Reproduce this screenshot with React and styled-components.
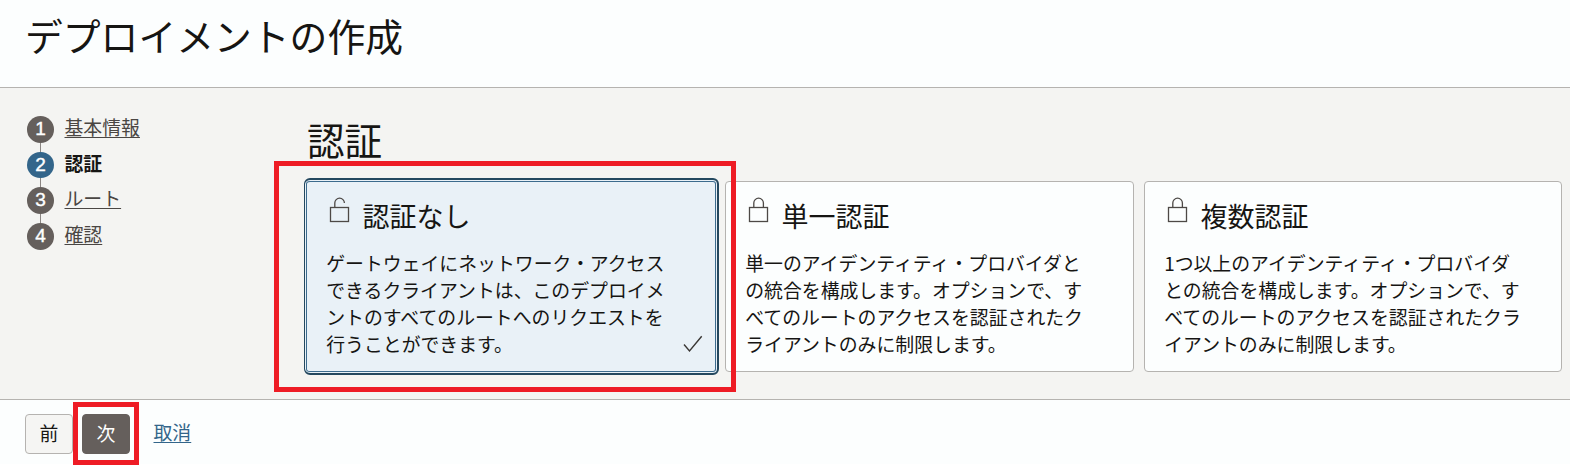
import React from "react";
import styled, { createGlobalStyle, css } from "styled-components";

const Global = createGlobalStyle`
  *, *::before, *::after { box-sizing: border-box; }
  body {
    margin: 0;
    background: #fff;
    color: #161513;
    font-family: "Noto Sans CJK JP", "Noto Sans", sans-serif;
    font-size: 18.88px;
    line-height: 27px;
    overflow: hidden;
  }
`;

const Page = styled.div`
  position: relative;
  width: 1570px;
  height: 472px;
`;

const Header = styled.header`
  height: 88px;
  padding: 8px 25px 0;
  background: #fcfefe;
  border-bottom: 1px solid #b5b3b0;
`;

const PageTitle = styled.h1`
  margin: 0;
  font-size: 37.8px;
  font-weight: 400;
  line-height: 54px;
`;

const Body = styled.main`
  display: flex;
  height: 312px;
  background: #f4f4f2;
  border-bottom: 1px solid #b5b3b0;
`;

const Steps = styled.ol`
  flex: none;
  width: 304px;
  margin: 0;
  padding: 28px 0 0 27px;
  list-style: none;
`;

const Step = styled.li`
  display: flex;
  align-items: flex-start;
  height: 35.67px;
`;

const Marker = styled.div`
  display: flex;
  flex-direction: column;
  align-items: center;
  width: 27px;
  height: 100%;
  margin-right: 10.5px;
`;

const Bullet = styled.span`
  flex: none;
  width: 27px;
  height: 26.6px;
  border-radius: 50%;
  background: ${(p) => (p.$active ? "#33658a" : "#655f5c")};
  color: #fff;
  font: 400 19px/25px "Liberation Sans", sans-serif;
  -webkit-text-stroke: 0.4px #fff;
  text-align: center;
`;

const Connector = styled.span`
  flex: 1;
  width: 1px;
  background: #8b8683;
`;

const underline = css`
  text-decoration: underline;
  text-decoration-thickness: 1px;
  text-underline-offset: 2px;
`;

const StepLabel = styled.a`
  line-height: 27px;
  margin-top: -3px;
  color: ${(p) => (p.$active ? "#161513" : "#4a4643")};
  font-weight: ${(p) => (p.$active ? 700 : 400)};
  ${(p) => !p.$active && underline}
`;

const Content = styled.section`
  padding-top: 24px;
`;

const SectionTitle = styled.h2`
  margin: 0 0 15px 3px;
  font-size: 37.6px;
  font-weight: 400;
  line-height: 54px;
`;

const Cards = styled.div`
  display: flex;
  align-items: flex-start;
`;

const Card = styled.article`
  position: relative;
  flex: none;
  width: ${(p) => p.$width}px;
  height: 191px;
  margin-right: 10px;
  padding: 14px 18px 0;
  background: #fcfefe;
  border: 1px solid #b5b3b0;
  border-radius: 4px;
  ${(p) =>
    p.$selected &&
    css`
      height: 197px;
      margin: -3px 6px 0 0;
      padding: 16px 20px 0;
      background: #e9f1f7;
      border: 2px solid #24485f;
      border-left-width: 1px;
      border-radius: 6px;
      box-shadow: inset 0 0 0 1px #e9f1f7, inset 0 0 0 2px #3c6b8d;
    `}
`;

const CardHead = styled.div`
  display: flex;
  align-items: flex-start;
  padding-left: 1px;
`;

const CardTitle = styled.h3`
  margin: 1px 0 0 10.4px;
  font-size: 27px;
  font-weight: 400;
  line-height: 38px;
`;

const CardText = styled.p`
  margin: 14px 0 0;
  padding-left: 1.2px;
  white-space: nowrap;
`;

const LockSvg = styled.svg`
  display: block;
  width: 26px;
  height: 28px;
  fill: none;
  stroke: #4d4946;
  stroke-width: 1.3;
`;

const CheckSvg = styled.svg`
  position: absolute;
  right: 14px;
  bottom: 20px;
  width: 20px;
  height: 18px;
  fill: none;
  stroke: #3a3734;
  stroke-width: 1.4;
`;

const Footer = styled.footer`
  display: flex;
  align-items: flex-start;
  height: 64px;
  padding: 14px 25px 0;
  background: #fcfefe;
`;

const Button = styled.button`
  width: 48px;
  height: 40px;
  margin-right: 9px;
  padding: 0 0 4px;
  border: 1px solid ${(p) => (p.$primary ? "#655f5c" : "#b5b3b0")};
  border-radius: 4px;
  background: ${(p) => (p.$primary ? "#655f5c" : "#f5f5f3")};
  color: ${(p) => (p.$primary ? "#fff" : "#161513")};
  font: 400 18.85px/27px "Noto Sans CJK JP", sans-serif;
`;

const Cancel = styled.a`
  margin: 4px 0 0 14.5px;
  color: #33658a;
  ${underline}
`;

const Highlight = styled.div`
  position: absolute;
  left: ${(p) => p.$x}px;
  top: ${(p) => p.$y}px;
  width: ${(p) => p.$w}px;
  height: ${(p) => p.$h}px;
  border: 5px solid #ee1c25;
  pointer-events: none;
`;

const Lock = ({ open }) => (
  <LockSvg viewBox="0 0 26 28">
    <rect x="4.5" y="11.5" width="18" height="14" />
    <path d={open ? "M8.8 11.5V7a4.8 4.8 0 0 1 9.6 0" : "M8.8 11.5V7a4.8 4.8 0 0 1 9.6 0v4.5"} />
  </LockSvg>
);

const Check = () => (
  <CheckSvg viewBox="0 0 20 18">
    <path d="M1 9.5L6.5 16L18.7 1.2" />
  </CheckSvg>
);

const steps = ["基本情報", "認証", "ルート", "確認"];

const cards = [
  {
    title: "認証なし",
    width: 415,
    selected: true,
    lines: [
      "ゲートウェイにネットワーク・アクセス",
      "できるクライアントは、このデプロイメ",
      "ントのすべてのルートへのリクエストを",
      "行うことができます。",
    ],
  },
  {
    title: "単一認証",
    width: 409,
    lines: [
      "単一のアイデンティティ・プロバイダと",
      "の統合を構成します。オプションで、す",
      "べてのルートのアクセスを認証されたク",
      "ライアントのみに制限します。",
    ],
  },
  {
    title: "複数認証",
    width: 418,
    lines: [
      "1つ以上のアイデンティティ・プロバイダ",
      "との統合を構成します。オプションで、す",
      "べてのルートのアクセスを認証されたクラ",
      "イアントのみに制限します。",
    ],
  },
];

export default function App() {
  return (
    <Page>
      <Global />
      <Header>
        <PageTitle>デプロイメントの作成</PageTitle>
      </Header>
      <Body>
        <Steps>
          {steps.map((label, i) => (
            <Step key={label}>
              <Marker>
                <Bullet $active={i === 1}>{i + 1}</Bullet>
                {i < steps.length - 1 && <Connector />}
              </Marker>
              <StepLabel $active={i === 1}>{label}</StepLabel>
            </Step>
          ))}
        </Steps>
        <Content>
          <SectionTitle>認証</SectionTitle>
          <Cards>
            {cards.map((c) => (
              <Card key={c.title} $width={c.width} $selected={c.selected}>
                <CardHead>
                  <Lock open={c.selected} />
                  <CardTitle>{c.title}</CardTitle>
                </CardHead>
                <CardText>
                  {c.lines.map((line, i) => (
                    <React.Fragment key={line}>
                      {i > 0 && <br />}
                      {line}
                    </React.Fragment>
                  ))}
                </CardText>
                {c.selected && <Check />}
              </Card>
            ))}
          </Cards>
        </Content>
      </Body>
      <Footer>
        <Button>前</Button>
        <Button $primary>次</Button>
        <Cancel>取消</Cancel>
      </Footer>
      <Highlight $x={274} $y={161} $w={462} $h={231} />
      <Highlight $x={73} $y={402} $w={66} $h={63} />
    </Page>
  );
}
